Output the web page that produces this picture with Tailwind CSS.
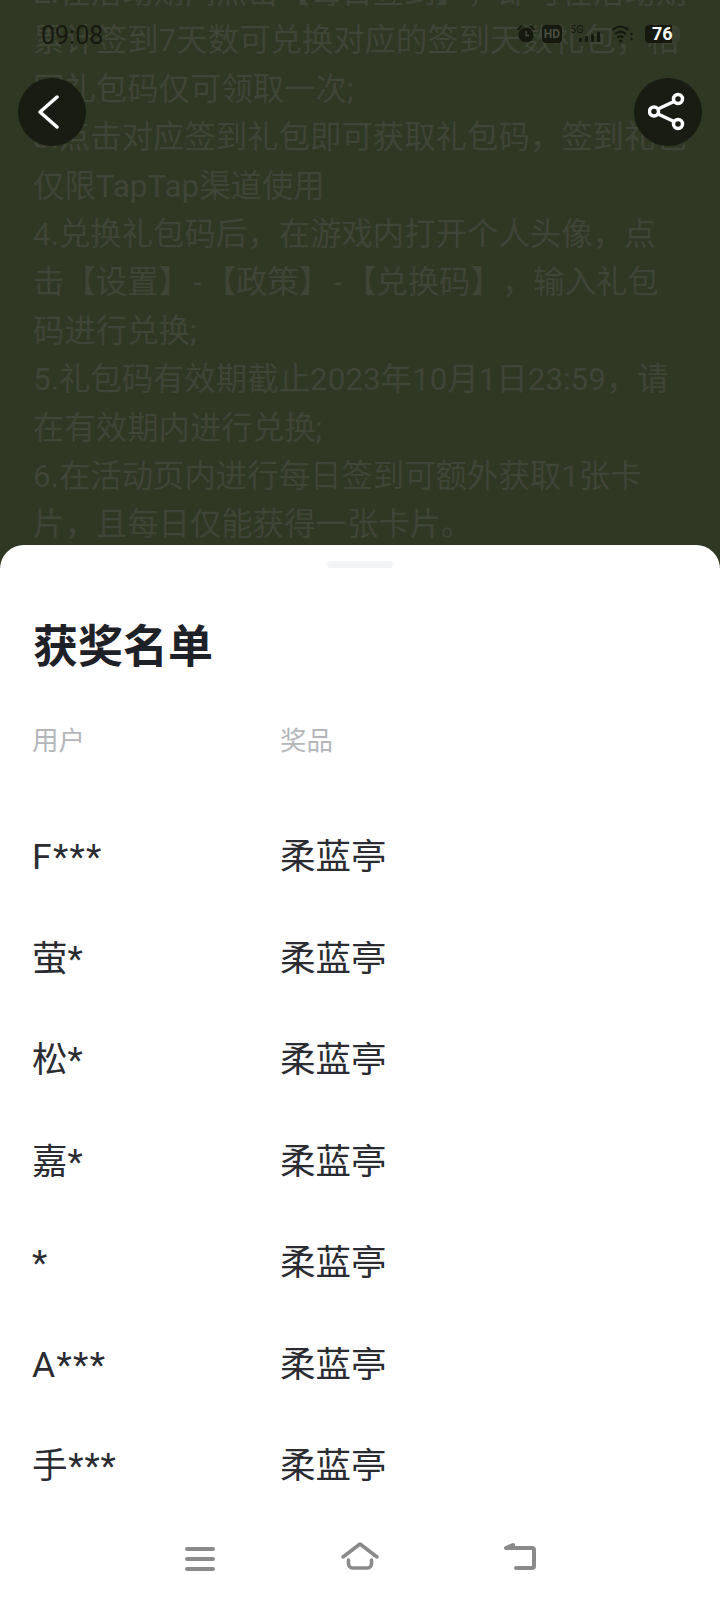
<!DOCTYPE html>
<html lang="zh">
  <head>
    <meta charset="UTF-8" />
    <meta name="viewport" content="width=device-width, initial-scale=1.0" />
    <title>获奖名单</title>
    <script src="https://cdn.jsdelivr.net/npm/@tailwindcss/browser@4"></script>
  </head>

  <body class="w-[720px] h-[1600px] overflow-hidden bg-[#2f3823] font-['Roboto','Noto_Sans_CJK_SC',sans-serif]">
    <!-- dimmed page behind the sheet -->
    <div class="relative h-[545px] overflow-hidden">
      <div class="mt-[-31px] pl-[33px] w-[720px] text-[31.4px] leading-[48.4px] whitespace-nowrap [text-spacing-trim:space-all] text-[#3f4537]">
        <p>2.在活动期间点击【每日签到】，即可在活动期</p>
        <p>累计签到7天数可兑换对应的签到天数礼包，相</p>
        <p>同礼包码仅可领取一次;</p>
        <p>3.点击对应签到礼包即可获取礼包码，签到礼包</p>
        <p>仅限TapTap渠道使用</p>
        <p>4.兑换礼包码后，在游戏内打开个人头像，点</p>
        <p>击【设置】<span class="mx-[3px]">-</span>【政策】<span class="mx-[3px]">-</span>【兑换码】，输入礼包</p>
        <p>码进行兑换;</p>
        <p>5.礼包码有效期截止2023年10月1日23:59，请</p>
        <p>在有效期内进行兑换;</p>
        <p>6.在活动页内进行每日签到可额外获取1张卡</p>
        <p>片，且每日仅能获得一张卡片。</p>
      </div>

      <!-- status bar -->
      <div class="absolute top-[20px] left-[41px] right-[40px] h-[32px] flex items-center justify-between text-[#15190f]">
        <span class="text-[25px] leading-[32px]">09:08</span>
        <div class="flex items-center mb-[4px]">
          <svg class="w-[18px] h-[18px]" viewBox="0 0 18 18" fill="#15190f">
            <circle cx="9" cy="10" r="7.500" />
            <path d="M0 4l4-4 1.500 1.500-4 4zM18 4l-4-4-1.500 1.500 4 4z" />
            <path d="M9 6v4.500h3" fill="none" stroke="#4a5040" stroke-width="1.300" />
          </svg>
          <div class="ml-[7px] w-[20px] h-[18px] rounded-[4px] bg-[#15190f] text-[#4a5040] text-[12px] leading-[18px] font-bold text-center">HD</div>
          <svg class="ml-[8px] w-[32px] h-[18px]" viewBox="0 0 32 18" fill="#15190f">
            <text x="0" y="8" font-size="11" font-family="Roboto">5G</text>
            <rect x="9" y="13" width="3" height="4" rx="1" />
            <rect x="15" y="11" width="3" height="6" rx="1" />
            <rect x="21" y="9" width="3" height="8" rx="1" />
            <rect x="27" y="7" width="3" height="10" rx="1" />
          </svg>
          <svg class="ml-[10px] w-[21px] h-[18px]" viewBox="0 0 21 18" fill="none" stroke="#15190f" stroke-width="2">
            <path d="M0.500 5c5-4.500 11-4.500 16 0M3 9c3.500-3 7.500-3 11 0M5.500 12.500c2-1.500 4-1.500 6 0" />
            <circle cx="8.500" cy="16" r="1.600" fill="#15190f" stroke="none" />
            <circle cx="19.500" cy="14" r="1.200" fill="#15190f" stroke="none" />
            <circle cx="19.500" cy="9" r="1.200" fill="#15190f" stroke="none" />
          </svg>
          <div class="ml-[12px] w-[35px] h-[18px] flex">
            <div class="w-[27px] h-[18px] rounded-l-[4px] bg-[#15190f]"></div>
            <div class="w-[8px] h-[18px] rounded-r-[6px] bg-[#3a4030]"></div>
            <span class="ml-[-28px] w-[20px] shrink-0 text-white text-[18px] leading-[18px] font-bold text-center">76</span>
          </div>
        </div>
      </div>

      <!-- round buttons -->
      <button class="absolute top-[78px] left-[18px] w-[68px] h-[68px] rounded-full bg-[#181c12] flex items-center justify-center">
        <svg class="w-[34px] h-[34px]" viewBox="0 0 34 34" fill="none" stroke="white" stroke-width="3.500" stroke-linecap="round" stroke-linejoin="round">
          <path d="M22 2 5 17l17 15" />
        </svg>
      </button>
      <button class="absolute top-[78px] right-[18px] w-[68px] h-[68px] rounded-full bg-[#181c12] flex items-center justify-center">
        <svg class="w-[40px] h-[40px]" viewBox="0 0 40 40" fill="none" stroke="white" stroke-width="3.500">
          <path d="M10 17 26 9.500M10 22l16 7.500" />
          <circle cx="30" cy="7" r="4.500" />
          <circle cx="6" cy="19.500" r="4.500" />
          <circle cx="30" cy="32" r="4.500" />
        </svg>
      </button>
    </div>

    <!-- winners sheet -->
    <div class="h-[1055px] bg-white rounded-t-[24px] flex flex-col">
      <div class="mt-[16px] mx-auto w-[66px] h-[7px] rounded-full bg-[#f3f4f6]"></div>
      <h2 class="mt-[50px] ml-[33px] text-[45px] leading-[60px] font-bold text-[#1f2129]">获奖名单</h2>
      <div class="mt-[45px] pl-[32px] grid grid-cols-[248px_1fr] text-[26.500px] leading-[36px] text-[#b4b6ba]">
        <span>用户</span>
        <span>奖品</span>
      </div>
      <div class="mt-[73px] pl-[32px] flex flex-col gap-[51.500px] text-[35.500px] leading-[50px] text-[#2a2c32]">
        <div class="grid grid-cols-[248px_1fr]"><span class="tracking-[1.3px]">F***</span><span>柔蓝亭</span></div>
        <div class="grid grid-cols-[248px_1fr]"><span>萤*</span><span>柔蓝亭</span></div>
        <div class="grid grid-cols-[248px_1fr]"><span>松*</span><span>柔蓝亭</span></div>
        <div class="grid grid-cols-[248px_1fr]"><span>嘉*</span><span>柔蓝亭</span></div>
        <div class="grid grid-cols-[248px_1fr]"><span>*</span><span>柔蓝亭</span></div>
        <div class="grid grid-cols-[248px_1fr]"><span class="tracking-[1.3px]">A***</span><span>柔蓝亭</span></div>
        <div class="grid grid-cols-[248px_1fr]"><span class="tracking-[0.8px]">手***</span><span>柔蓝亭</span></div>
      </div>
      <!-- nav bar -->
      <div class="mt-[46px] flex justify-center gap-[120px]">
        <svg class="w-[40px] h-[40px]" viewBox="0 0 40 40" fill="none" stroke="#8a8a8a" stroke-width="4" stroke-linecap="round">
          <path d="M7 12h26M7 22h26M7 32h26" />
        </svg>
        <svg class="w-[40px] h-[40px]" viewBox="0 0 40 40" fill="none" stroke="#8a8a8a" stroke-width="3.500" stroke-linecap="round" stroke-linejoin="round">
          <path d="M3 20 20 7l17 13M8.500 23v4a4 4 0 0 0 4 4h15a4 4 0 0 0 4-4v-4" />
        </svg>
        <svg class="w-[40px] h-[40px]" viewBox="0 0 40 40" fill="none" stroke="#8a8a8a" stroke-width="4" stroke-linecap="round" stroke-linejoin="round">
          <path d="M16 31h16a2 2 0 0 0 2-2V13a2 2 0 0 0-2-2H6M13 8 6 11" />
        </svg>
      </div>
    </div>
  </body>
</html>
